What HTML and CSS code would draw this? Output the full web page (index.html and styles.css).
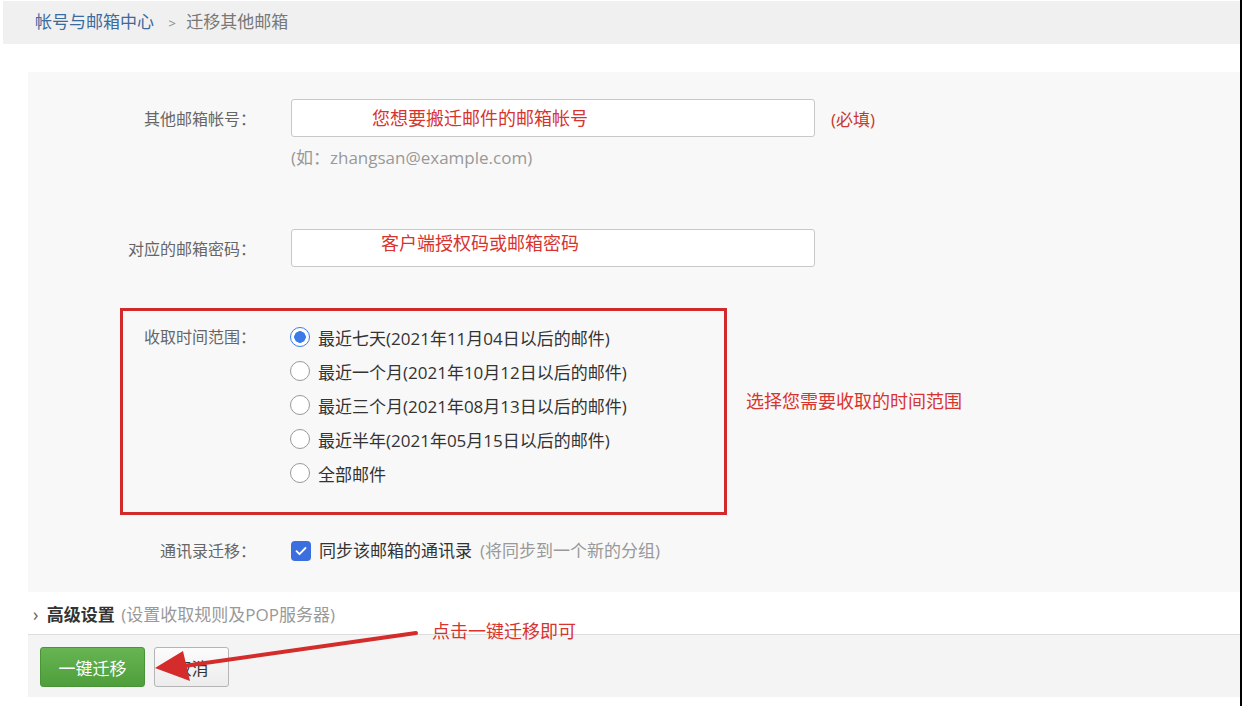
FILE: index.html
```html
<!DOCTYPE html>
<html lang="zh-CN">
<head>
  <meta charset="UTF-8">
  <title>迁移其他邮箱</title>
  <link rel="stylesheet" href="styles.css">
</head>
<body>

<div class="page">
  <div class="crumb">
    <a class="crumb-link" href="#">帐号与邮箱中心</a>
    <span class="crumb-sep">&gt;</span>
    <span class="crumb-current">迁移其他邮箱</span>
  </div>

  <div class="panel">
    <div class="form-row first-row">
      <label class="form-label">其他邮箱帐号：</label>
      <div class="form-field">
        <div class="text-input"><span class="note note-account">您想要搬迁邮件的邮箱帐号</span></div>
        <span class="required">(必填)</span>
      </div>
    </div>
    <div class="hint">(如：zhangsan@example.com)</div>

    <div class="form-row pwd-row">
      <label class="form-label">对应的邮箱密码：</label>
      <div class="form-field">
        <div class="text-input"><span class="note note-pwd">客户端授权码或邮箱密码</span></div>
      </div>
    </div>

    <div class="range-wrap">
      <div class="range-box">
        <label class="form-label range-label">收取时间范围：</label>
        <ul class="radio-list">
          <li class="radio-item"><span class="radio checked"></span>最近七天(2021年11月04日以后的邮件)</li>
          <li class="radio-item"><span class="radio"></span>最近一个月(2021年10月12日以后的邮件)</li>
          <li class="radio-item"><span class="radio"></span>最近三个月(2021年08月13日以后的邮件)</li>
          <li class="radio-item"><span class="radio"></span>最近半年(2021年05月15日以后的邮件)</li>
          <li class="radio-item"><span class="radio"></span>全部邮件</li>
        </ul>
      </div>
      <div class="note range-note">选择您需要收取的时间范围</div>
    </div>

    <div class="form-row contact-row">
      <label class="form-label">通讯录迁移：</label>
      <div class="form-field">
        <span class="checkbox">
          <svg width="20" height="20" viewBox="0 0 20 20"><path d="M5.5 10.2l3 3 6-6.2" fill="none" stroke="#fff" stroke-width="1.8" stroke-linecap="round" stroke-linejoin="round"/></svg>
        </span>
        <span class="check-text">同步该邮箱的通讯录</span>
        <span class="check-hint">(将同步到一个新的分组)</span>
      </div>
    </div>
  </div>

  <div class="advanced">
    <span class="chevron">›</span>
    <span class="adv-title">高级设置</span>
    <span class="adv-hint">(设置收取规则及POP服务器)</span>
  </div>

  <div class="footer">
    <button class="btn btn-primary">一键迁移</button>
    <button class="btn btn-cancel">取消</button>
  </div>

  <!-- annotations drawn over the screenshot -->
  <div class="note click-note">点击一键迁移即可</div>
  <svg class="arrow" width="280" height="64" viewBox="0 0 280 64">
    <line x1="266" y1="8" x2="34" y2="41" stroke="#d42b2b" stroke-width="4" stroke-linecap="round"/>
    <polygon points="5,43 33,26 40,56" fill="#d42b2b"/>
  </svg>
</div>

</body>
</html>
```

FILE: styles.css
```css
body {
  margin: 0;
  background-color: #fff;
  font-family: "Open Sans", "Noto Sans CJK SC", sans-serif;
  color: #333;
}

.page {
  position: relative;
  width: 1240px;
  height: 706px;
  border-right: 2px solid #000;
  overflow: hidden;
}

.crumb {
  margin: 1px 0 0 3px;
  height: 43px;
  line-height: 42px;
  padding-left: 32px;
  background-color: #f0f0f0;
  font-size: 17px;
}

.crumb-link {
  color: #3a6a9e;
  text-decoration: none;
}

.crumb-sep {
  color: #888;
  font-size: 13px;
  margin: 0 6px 0 10px;
}

.crumb-current {
  color: #777;
}

.panel {
  margin: 28px 0 0 28px;
  height: 520px;
  padding-top: 27px;
  box-sizing: border-box;
  background-color: #f8f8f8;
}

.form-row {
  display: grid;
  grid-template-columns: 228px 1fr;
  column-gap: 35px;
  align-items: center;
}

.form-label {
  text-align: right;
  color: #666;
  font-size: 16px;
}

.form-field {
  display: flex;
  align-items: center;
}

.text-input {
  width: 524px;
  height: 38px;
  box-sizing: border-box;
  border: 1px solid #c8c8c8;
  border-radius: 3px;
  background-color: #fff;
  display: flex;
  align-items: center;
}

.note {
  color: #d8342f;
  font-size: 18px;
  line-height: 24px;
}

.note-account {
  padding-left: 80px;
}

.note-pwd {
  padding-left: 89px;
  margin-top: -10px;
}

.required {
  margin-left: 16px;
  color: #c8382d;
  font-size: 17px;
}

.hint {
  margin: 10px 0 0 263px;
  line-height: 22px;
  color: #999;
  font-size: 17px;
}

.pwd-row {
  margin-top: 60px;
}

.range-wrap {
  display: flex;
  margin: 41px 0 0 92px;
}

.range-box {
  width: 607px;
  height: 207px;
  box-sizing: border-box;
  border: 3px solid #d22a2a;
  padding-top: 9px;
  display: grid;
  grid-template-columns: 133px 1fr;
  column-gap: 34px;
  align-items: start;
}

.range-label {
  line-height: 34px;
}

.radio-list {
  list-style: none;
  margin: 0;
  padding: 0;
}

.radio-item {
  display: flex;
  align-items: center;
  height: 34px;
  font-size: 17px;
  color: #333;
}

.radio {
  width: 20px;
  height: 20px;
  box-sizing: border-box;
  border: 1.5px solid #999;
  border-radius: 50%;
  background-color: #fff;
  margin-right: 8px;
  flex-shrink: 0;
}

.radio.checked {
  border-color: #3b7be8;
  background: radial-gradient(circle, #3b7be8 0 5.5px, #fff 6px);
}

.range-note {
  margin: 81px 0 0 19px;
}

.contact-row {
  margin-top: 24px;
  line-height: 24px;
}

.checkbox {
  width: 20px;
  height: 20px;
  border-radius: 4px;
  background-color: #3b6fe0;
  margin-right: 8px;
  display: flex;
}

.check-text {
  font-size: 17px;
  color: #333;
}

.check-hint {
  margin-left: 8px;
  font-size: 17px;
  color: #999;
}

.advanced {
  margin-left: 28px;
  height: 42px;
  line-height: 44px;
  padding-left: 5px;
  border-bottom: 1px solid #ddd;
  font-size: 17px;
}

.chevron {
  color: #666;
  font-size: 18px;
  margin-right: 4px;
}

.adv-title {
  font-weight: bold;
  color: #333;
}

.adv-hint {
  margin-left: 2px;
  color: #999;
  font-size: 17px;
}

.footer {
  margin-left: 28px;
  height: 62px;
  padding: 12px 0 0 12px;
  box-sizing: border-box;
  background-color: #f4f4f4;
  display: flex;
  gap: 9px;
}

.btn {
  height: 40px;
  border-radius: 3px;
  font-family: "Open Sans", "Noto Sans CJK SC", sans-serif;
  font-size: 17px;
  cursor: pointer;
}

.btn-primary {
  width: 105px;
  color: #fff;
  border: 1px solid #4a9438;
  background: linear-gradient(#66b452, #4f9e3c);
}

.btn-cancel {
  width: 75px;
  color: #333;
  border: 1px solid #b5b5b5;
  background: linear-gradient(#fcfcfc, #ececec);
}

.click-note {
  position: absolute;
  left: 432px;
  top: 619px;
}

.arrow {
  position: absolute;
  left: 150px;
  top: 625px;
}
```
